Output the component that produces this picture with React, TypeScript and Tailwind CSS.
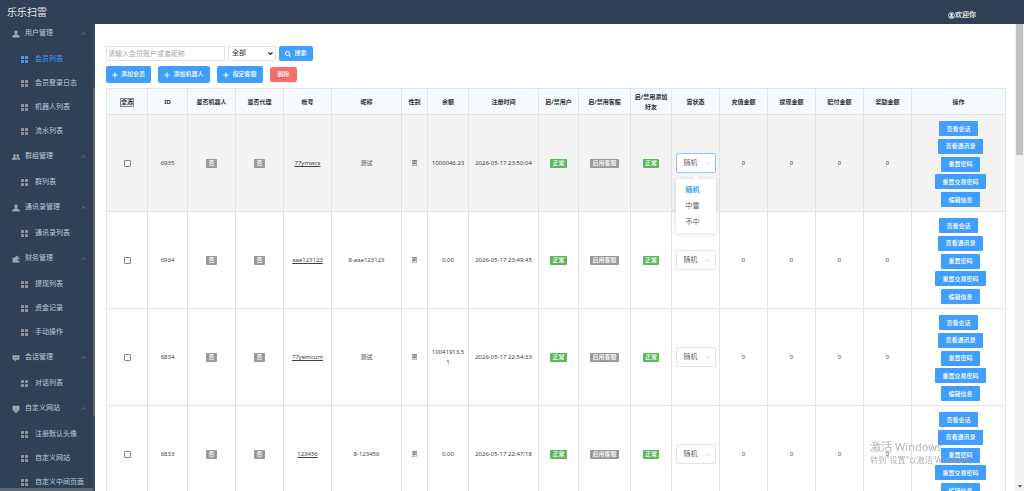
import React from 'react';
import { ChevronDown, ChevronUp } from 'lucide-react';
import { FaPlus, FaSearch } from 'react-icons/fa';

// filled glyphs for the menu groups, 14x14 grid
const ICONS = {
  user: 'M7 1a3 3 0 0 1 3 3c0 1.500-.700 2.600-1.500 3.200v.800L12 9.300c1 .400 1.500 1 1.500 2V13H.500v-1.700c0-1 .500-1.600 1.500-2L5.500 8v-.800C4.700 6.600 4 5.500 4 4a3 3 0 0 1 3-3z',
  group:
    'M4.500 2a2.200 2.200 0 0 1 1.300 4v1.600l2 1c.6.300.900.800.900 1.500V12H0v-1.900c0-.700.300-1.200.900-1.500l2.200-1V6a2.200 2.200 0 0 1 1.400-4zM10 2a2.200 2.200 0 0 1 1.300 4v1.600l1.800 1c.6.300.900.800.900 1.500V12H9.700v-2.500c0-.700-.400-1.200-1-1.600l-.200-.100V6A2.200 2.200 0 0 1 10 2z',
  wallet: 'M1 5h3l5-4 2 2-1.500 2H13v3H9v2h4v3H1z',
  message: 'M1 2h12v8H8l-3 3v-3H1zM3.500 5.300v1.400h1.400V5.300zM6.300 5.300v1.400h1.400V5.300zM9.100 5.300v1.400h1.400V5.300z',
  monitor: 'M1 1.500h12v8.500H9v1.500h1.500V13h-7v-1.500H5V10H1z',
};

const MENU: { label: string; icon: keyof typeof ICONS; items: string[] }[] = [
  { label: '用户管理', icon: 'user', items: ['会员列表', '会员登录日志', '机器人列表', '流水列表'] },
  { label: '群组管理', icon: 'group', items: ['群列表'] },
  { label: '通讯录管理', icon: 'user', items: ['通讯录列表'] },
  { label: '财务管理', icon: 'wallet', items: ['提现列表', '资金记录', '手动操作'] },
  { label: '会话管理', icon: 'message', items: ['对话列表'] },
  { label: '自定义网站', icon: 'monitor', items: ['注册默认头像', '自定义网站', '自定义中间页面'] },
];

const COLUMNS: { label: string; width: string }[] = [
  { label: '全选', width: 'w-[41px]' },
  { label: 'ID', width: 'w-[40px]' },
  { label: '是否机器人', width: 'w-[48px]' },
  { label: '是否代理', width: 'w-[48px]' },
  { label: '帐号', width: 'w-[48px]' },
  { label: '昵称', width: 'w-[70px]' },
  { label: '性别', width: 'w-[26px]' },
  { label: '余额', width: 'w-[41px]' },
  { label: '注册时间', width: 'w-[70px]' },
  { label: '启/禁用户', width: 'w-[40px]' },
  { label: '启/禁用客服', width: 'w-[52px]' },
  { label: '启/禁用添加好友', width: 'w-[41px]' },
  { label: '雷状态', width: 'w-[48px]' },
  { label: '充值金额', width: 'w-[48px]' },
  { label: '提现金额', width: 'w-[48px]' },
  { label: '赔付金额', width: 'w-[48px]' },
  { label: '奖励金额', width: 'w-[48px]' },
  { label: '操作', width: 'w-[94px]' },
];

const MEMBERS = [
  { id: '6935', account: '77ymwcs', nickname: '测试', balance: '1000046.23', createdAt: '2026-05-17 23:50:04' },
  { id: '6934', account: 'aaa123123', nickname: '8-aaa123123', balance: '0.00', createdAt: '2026-05-17 23:49:45' },
  { id: '6834', account: '77yemcom', nickname: '测试', balance: '10041913.51', createdAt: '2026-05-17 22:54:33' },
  { id: '6833', account: '123456', nickname: '8-123456', balance: '0.00', createdAt: '2026-05-17 22:47:18' },
];

const ACTIONS = ['查看会话', '查看通讯录', '重置密码', '重置交易密码', '编辑信息'];
const STATES = ['随机', '中雷', '不中'];

export default function App() {
  const [openId, setOpenId] = React.useState<string | null>('6935');

  return (
    <div className="flex h-screen flex-col overflow-hidden bg-white font-['Noto_Sans','Noto_Sans_CJK_SC',sans-serif] text-[6px] text-[#404244]">
      <header className="z-10 flex h-6 shrink-0 items-center justify-between bg-[#304156] pr-12 pl-[7px] text-white">
        <h1 className="text-[10px] text-[#e6eaf0]">乐乐扫雷</h1>
        <span className="flex items-center pt-[6px] text-[7px] font-medium">
          <UserBadge />
          欢迎你
        </span>
      </header>

      <div className="flex min-h-0 flex-1">
        <Sidebar />
        <main className="min-w-0 flex-1 overflow-hidden pt-[22px] pr-[10px] pl-[11px]">
          <Toolbar />
          <table className="mt-[5px] w-full table-fixed border-collapse text-center leading-[10px]">
            <thead>
              <tr className="h-[26px] bg-[#f5faff] text-[#333]">
                {COLUMNS.map((col, i) => (
                  <th key={col.label} className={`${col.width} border border-[#e2e4e6] px-[2px] py-0 font-bold`}>
                    {i === 0 ? (
                      <button type="button" className="border border-[#8a8a8a] bg-[#e9e9e9] leading-[7px] font-medium text-[#222]">
                        {col.label}
                      </button>
                    ) : (
                      col.label
                    )}
                  </th>
                ))}
              </tr>
            </thead>
            <tbody>
              {MEMBERS.map((member, i) => (
                <MemberRow
                  key={member.id}
                  member={member}
                  active={i === 0}
                  open={openId === member.id}
                  onToggle={() => setOpenId(openId === member.id ? null : member.id)}
                />
              ))}
            </tbody>
          </table>
        </main>
        <PageScrollbar />
      </div>

      <div className="pointer-events-none fixed right-[47px] bottom-[26px] z-20 text-[#a0a0a0]/80">
        <p className="text-[11px] leading-[14px]">激活 Windows</p>
        <p className="text-[8px] leading-[11px]">转到"设置"以激活 Windows。</p>
      </div>
    </div>
  );
}

function UserBadge() {
  return (
    <svg viewBox="0 0 14 14" className="size-[7px]" fill="none" stroke="currentColor" strokeWidth="1.5" aria-hidden="true">
      <circle cx="7" cy="7" r="6" />
      <circle cx="7" cy="5.3" r="2" fill="currentColor" />
      <path d="M3.5 11c.6-2 1.8-2.6 3.500-2.600s2.900.600 3.500 2.600" fill="currentColor" />
    </svg>
  );
}

function GridIcon() {
  return (
    <svg viewBox="0 0 14 14" className="size-[7px] shrink-0" fill="currentColor" aria-hidden="true">
      <rect x="0" y="0" width="6" height="6" rx="1" />
      <rect x="8" y="0" width="6" height="6" rx="1" />
      <rect x="0" y="8" width="6" height="6" rx="1" />
      <rect x="8" y="8" width="6" height="6" rx="1" />
    </svg>
  );
}

function Sidebar() {
  return (
    <aside className="flex w-[95px] shrink-0 overflow-hidden bg-[#304156] text-[7px] text-[#bfcbd9]">
      <div className="flex min-w-0 flex-1 flex-col">
        <nav className="-mt-1 min-h-0 flex-1 overflow-hidden whitespace-nowrap">
          {MENU.map((group, g) => (
            <section key={group.label}>
              <button type="button" className="flex h-[27px] w-full items-center pr-[6px] pl-3">
                <svg viewBox="0 0 14 14" className="mr-[5px] size-2 shrink-0" fill="#a3a6ab" fillRule="evenodd" aria-hidden="true">
                  <path d={ICONS[group.icon]} />
                </svg>
                {group.label}
                <ChevronUp size={7} className="ml-auto text-[#909399]" />
              </button>
              <ul>
                {group.items.map((item, i) => {
                  const current = g === 0 && i === 0;
                  return (
                    <li key={item}>
                      <a
                        href="#"
                        className={`flex h-6 items-center gap-[7px] pl-[21px] ${current ? 'text-[#409eff]' : ''}`}
                      >
                        <span className={current ? 'text-[#409eff]' : 'text-[#909399]'}>
                          <GridIcon />
                        </span>
                        {item}
                      </a>
                    </li>
                  );
                })}
              </ul>
            </section>
          ))}
        </nav>
        <div className="h-[3px] shrink-0 bg-[#5c6776]" />
      </div>
      {/* sidebar scroll track */}
      <div className="w-[2px] bg-[#3b4a5e] pt-16">
        <div className="h-[328px] bg-[#5c6776]" />
      </div>
    </aside>
  );
}

const PRIMARY = 'flex items-center justify-center gap-[3px] rounded-[2px] bg-[#409eff] font-medium text-white';

function Toolbar() {
  return (
    <div>
      <form className="flex items-center gap-[3px] text-[7px]" onSubmit={(e) => e.preventDefault()}>
        <input
          type="text"
          aria-label="会员账户或者昵称"
          placeholder="请输入会员账户或者昵称"
          className="h-[15px] w-[119px] border border-[#e2e4e6] px-[1px] placeholder:text-[#a9a9a9]"
        />
        <span className="relative flex items-center">
          <select aria-label="类型" className="h-[15px] w-12 appearance-none border border-[#e2e4e6] bg-white pl-[3px] text-[#333]">
            <option>全部</option>
          </select>
          <ChevronDown size={7} strokeWidth={4} className="pointer-events-none absolute right-[2px] text-[#222]" />
        </span>
        <button type="submit" className={`${PRIMARY} h-[15px] w-[34px] text-[6px]`}>
          <FaSearch size={6} />
          搜索
        </button>
      </form>
      <div className="mt-[5px] flex items-center gap-[7px]">
        <button type="button" className={`${PRIMARY} h-[17px] w-[45px]`}>
          <FaPlus size={6} />
          添加会员
        </button>
        <button type="button" className={`${PRIMARY} h-[17px] w-[52px]`}>
          <FaPlus size={6} />
          添加机器人
        </button>
        <button type="button" className={`${PRIMARY} h-[17px] w-[46px]`}>
          <FaPlus size={6} />
          指定客服
        </button>
        <button type="button" className="h-[15px] w-[27px] rounded-[2px] bg-[#f56c6c] font-medium text-white">
          删除
        </button>
      </div>
    </div>
  );
}

function Tag({ children, color }: { children: React.ReactNode; color: 'green' | 'gray' }) {
  return (
    <span
      className={`inline-block rounded-[1px] px-[2px] leading-[9px] font-medium whitespace-nowrap text-white ${color === 'green' ? 'bg-[#5cb85c]' : 'bg-[#999]'}`}
    >
      {children}
    </span>
  );
}

function MemberRow({
  member,
  active,
  open,
  onToggle,
}: {
  member: (typeof MEMBERS)[number];
  active: boolean;
  open: boolean;
  onToggle: () => void;
}) {
  const td = 'border border-[#e2e4e6] px-[3px] py-0 break-all';

  return (
    <tr className={`h-[97px] ${active ? 'bg-[#f3f3f3]' : 'bg-white'}`}>
      <td className={td}>
        <input
          type="checkbox"
          aria-label={`选择 ${member.id}`}
          className="size-[7px] appearance-none rounded-[1px] border border-[#888] bg-white align-middle"
        />
      </td>
      <td className={td}>{member.id}</td>
      <td className={td}><Tag color="gray">否</Tag></td>
      <td className={td}><Tag color="gray">否</Tag></td>
      <td className={td}>
        <a href="#" className="underline">{member.account}</a>
      </td>
      <td className={td}>{member.nickname}</td>
      <td className={td}>男</td>
      <td className={td}>{member.balance}</td>
      <td className={td}>{member.createdAt}</td>
      <td className={td}><Tag color="green">正常</Tag></td>
      <td className={td}><Tag color="gray">启用客服</Tag></td>
      <td className={td}><Tag color="green">正常</Tag></td>
      <td className={td}>
        <StateSelect open={open} onToggle={onToggle} />
      </td>
      <td className={td}>0</td>
      <td className={td}>0</td>
      <td className={td}>0</td>
      <td className={td}>0</td>
      <td className={td}>
        <div className="flex h-[88px] flex-col items-center justify-between pt-[2px]">
          {ACTIONS.map((action, i) => (
            <button
              key={action}
              type="button"
              className={`h-[15px] rounded-[1px] bg-[#409eff] px-[7px] font-medium text-white ${i > 0 ? 'ml-1' : ''}`}
            >
              {action}
            </button>
          ))}
        </div>
      </td>
    </tr>
  );
}

function StateSelect({ open, onToggle }: { open: boolean; onToggle: () => void }) {
  const Arrow = open ? ChevronUp : ChevronDown;

  return (
    <div className="relative mx-auto w-10 text-[7px] text-[#606266]">
      <button
        type="button"
        aria-haspopup="listbox"
        aria-expanded={open}
        onClick={onToggle}
        className={`flex h-5 w-full items-center justify-between rounded-[2px] border bg-white pr-[3px] pl-[7px] ${open ? 'border-[#8cc4ff]' : 'border-[#e2e4e6]'}`}
      >
        随机
        <Arrow size={9} strokeWidth={2} className="text-[#c0c4cc]" />
      </button>
      {open && (
        <div className="absolute top-full left-0 z-10 mt-[6px] w-full rounded-[2px] bg-white py-[3px] text-left shadow-[0_1px_5px_rgba(0,0,0,.15)]">
          <span className="absolute -top-[2px] left-[17px] size-[5px] rotate-45 bg-white" />
          <ul role="listbox">
            {STATES.map((state, i) => (
              <li
                key={state}
                role="option"
                aria-selected={i === 0}
                className={`relative h-4 pl-[10px] leading-4 ${i === 0 ? 'font-bold text-[#409eff]' : ''}`}
              >
                {state}
              </li>
            ))}
          </ul>
        </div>
      )}
    </div>
  );
}

function PageScrollbar() {
  return (
    <div className="flex w-[9px] shrink-0 flex-col items-center justify-between bg-[#f1f1f1] pb-[3px]">
      <div className="h-[131px] w-[7px] bg-[#c1c1c1]" />
      <svg viewBox="0 0 6 4" className="w-1" fill="#505050" aria-hidden="true">
        <path d="M0 0h6L3 4z" />
      </svg>
    </div>
  );
}
